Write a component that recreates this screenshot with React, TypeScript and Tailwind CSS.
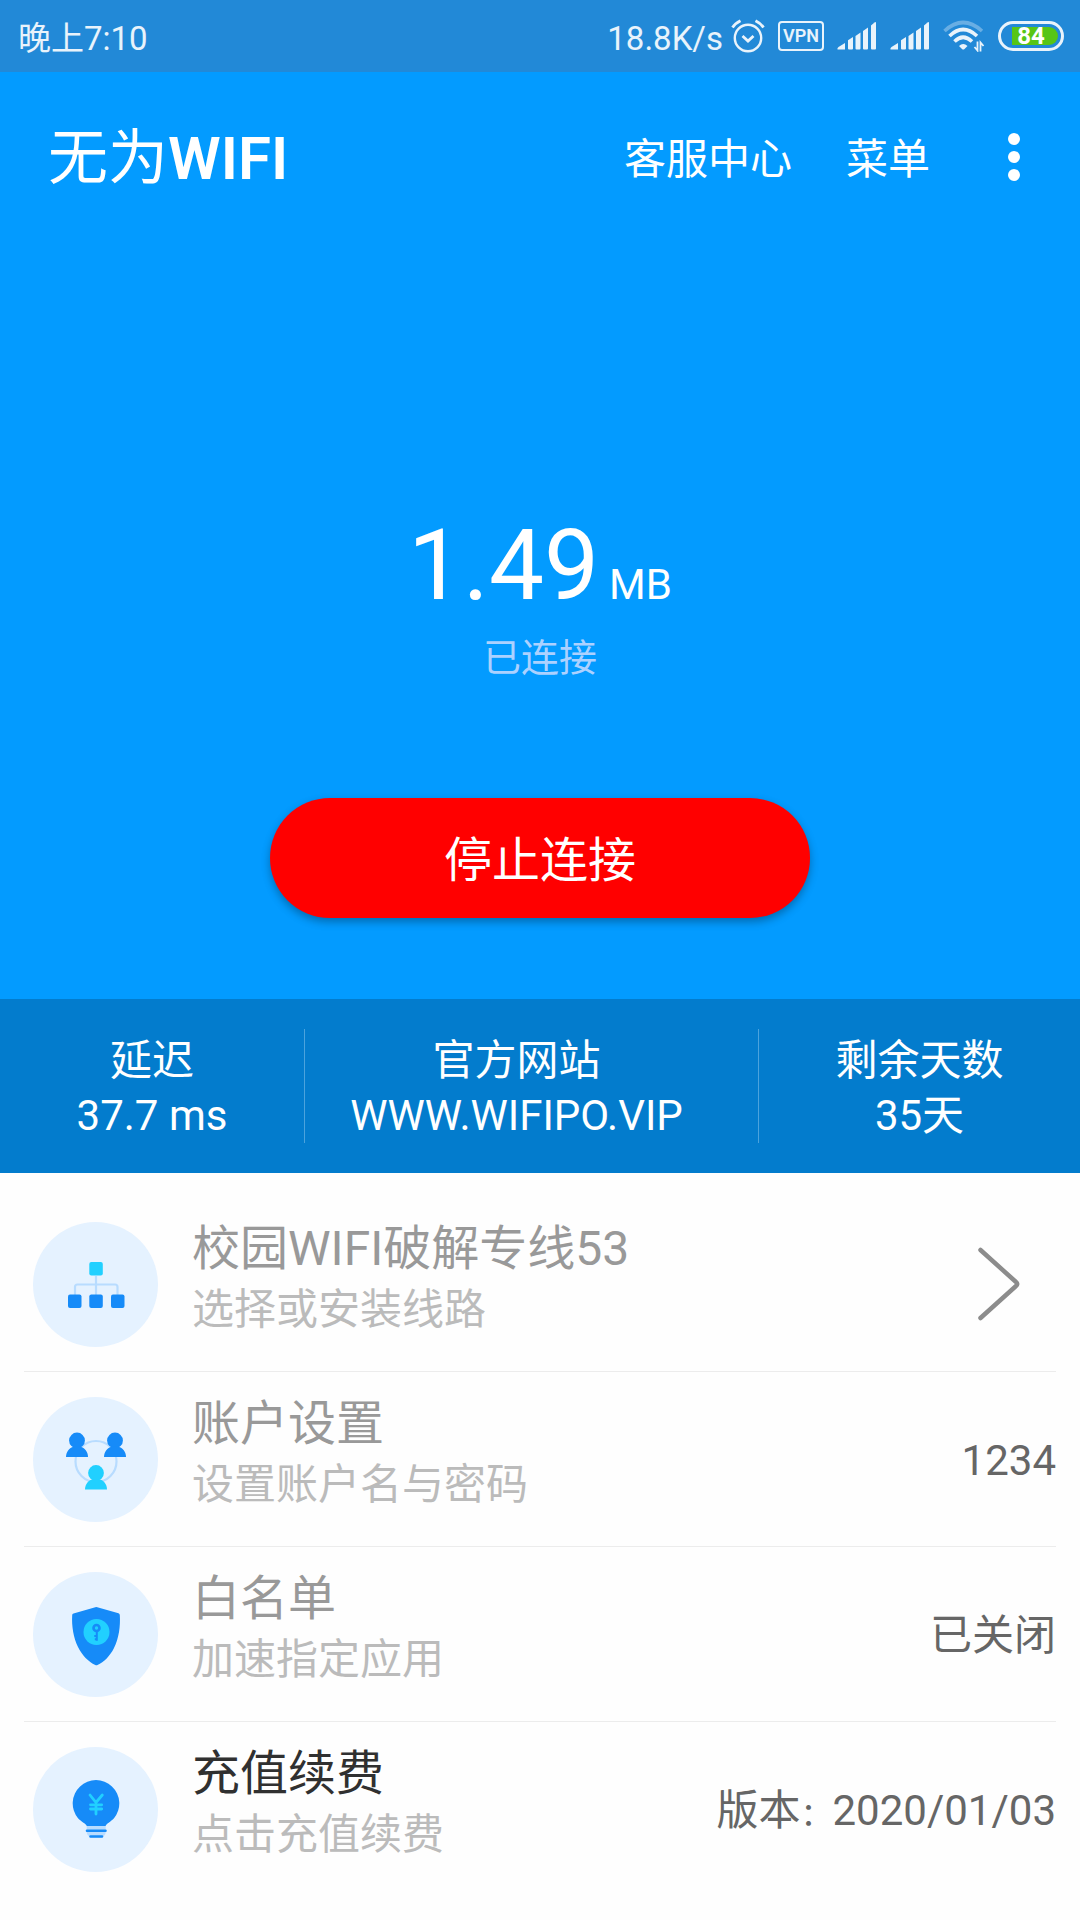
import type { ReactNode } from 'react'

type Row = {
  title: string
  subtitle: string
  icon: ReactNode
  value?: ReactNode
  active?: boolean
}

function AlarmIcon() {
  return (
    <svg viewBox="0 0 34 34" className="h-[34px] w-[34px]" fill="none" stroke="currentColor">
      <circle cx="17" cy="19" r="13.2" strokeWidth="2.4" />
      <path d="M11.5 17L17 22L22.5 17" strokeWidth="2.8" />
      <path d="M1.5 8.5Q4 4.5 9.5 1.8M32.5 8.5Q30 4.5 24.5 1.8" strokeWidth="2.8" />
    </svg>
  )
}

function SignalIcon() {
  return (
    <svg viewBox="0 0 40 30" className="h-[30px] w-10" fill="currentColor">
      <path d="M0.5 28.5Q0 27 1.5 26L8 22V28.5Z" />
      <path d="M11 19.2L16 16V27.5Q16 28.5 15 28.5H12Q11 28.5 11 27.5Z" />
      <path d="M18.5 15L23.5 11.5V27.5Q23.5 28.5 22.5 28.5H19.5Q18.5 28.5 18.5 27.5Z" />
      <path d="M26 10L31 6.5V27.5Q31 28.5 30 28.5H27Q26 28.5 26 27.5Z" />
      <path d="M34 4.5L37.5 1.5Q39 0.5 39 2V27.5Q39 28.5 38 28.5H35Q34 28.5 34 27.5Z" />
    </svg>
  )
}

function WifiIcon() {
  return (
    <svg viewBox="0 0 42 32" className="h-8 w-[42px]" fill="none" stroke="currentColor" strokeWidth="3.6">
      <path d="M1.5 11Q20 -6 39 11" opacity="0.35" />
      <path d="M6.5 16Q20 3 34 16" />
      <path d="M11.5 21.5Q20 13 29 21.5" />
      <path d="M16 26Q20.200 22 24.500 26L21.500 29Q20.200 30 19 29Z" fill="currentColor" stroke="none" />
      <path d="M34.5 21.5V30.5L31.5 27M37.5 31.5V22.5L40.5 26" strokeWidth="1.8" />
    </svg>
  )
}

function Battery({ level }: { level: number }) {
  return (
    <span className="relative flex h-[30px] w-[66px] items-center justify-end rounded-full border-[3px] border-white/90 pr-[3px]">
      <span className="h-[18px] w-[46px] rounded-l-xs rounded-r-full bg-[#57c515]" />
      <span className="absolute inset-0 flex items-center justify-center text-2xl leading-none font-bold text-white">
        {level}
      </span>
    </span>
  )
}

function StatusBar() {
  return (
    <div className="flex h-[72px] items-center justify-between bg-[#2289d7] pr-4 pl-[18px] text-[33px] leading-none text-white/90">
      <span className="pt-1">晚上7:10</span>
      <div className="flex items-center">
        <span className="pt-1">18.8K/s</span>
        <div className="ml-2 flex items-center gap-[13px]">
          <AlarmIcon />
          <span className="flex h-[30px] w-[46px] items-center justify-center rounded-sm border-2 border-white/90 text-lg leading-none font-semibold">
            VPN
          </span>
          <SignalIcon />
          <SignalIcon />
          <WifiIcon />
          <Battery level={84} />
        </div>
      </div>
    </div>
  )
}

function RouteIcon() {
  return (
    <svg viewBox="0 0 125 125" className="h-[125px] w-[125px]">
      <path d="M63 54V73M42 73V65Q42 62.5 44.5 62.5H82Q84.5 62.5 84.5 65V73" fill="none" stroke="#b8dcff" strokeWidth="2.2" />
      <rect x="56.3" y="40" width="13.5" height="13.5" rx="2" fill="#21d0ff" />
      <g fill="#168bf8">
        <rect x="35" y="72.5" width="13.5" height="13.5" rx="2" />
        <rect x="56.3" y="72.5" width="13.5" height="13.5" rx="2" />
        <rect x="78" y="72.5" width="13.5" height="13.5" rx="2" />
      </g>
    </svg>
  )
}

function Person({ x, y, color }: { x: number; y: number; color: string }) {
  return (
    <g transform={`translate(${x} ${y})`} fill={color}>
      <circle r="7.9" />
      <path d="M-11 16.5C-11 11 -7.5 7.5 -3.5 6.3H3.5C7.5 7.5 11 11 11 16.5Z" />
    </g>
  )
}

function AccountIcon() {
  return (
    <svg viewBox="0 0 125 125" className="h-[125px] w-[125px]">
      <circle cx="63" cy="64.5" r="20.5" fill="none" stroke="#b8dcff" strokeWidth="2.2" />
      <Person x={44} y={43.5} color="#168bf8" />
      <Person x={82} y={43.5} color="#168bf8" />
      <Person x={63} y={76} color="#21d0ff" />
    </svg>
  )
}

function ShieldIcon() {
  return (
    <svg viewBox="0 0 125 125" className="h-[125px] w-[125px]">
      <path
        d="M62.3 35.2Q63.3 34.8 64.3 35.2L85.5 41.2Q86.7 41.6 86.8 43C87.5 54 86 66 81 76C77 84 71 90 64.5 93Q63.4 93.5 62.3 93C55.5 90 49 83 45 75C40.5 66 38.5 54 39.2 43Q39.3 41.8 40.5 41.4Z"
        fill="#168bf8"
      />
      <circle cx="63.5" cy="60" r="13" fill="#21d0ff" />
      <circle cx="63.5" cy="56" r="3" fill="none" stroke="#168bf8" strokeWidth="2.6" />
      <path d="M63.8 58.5V68.7M64 64H61.3M64 67.2H61.8" fill="none" stroke="#168bf8" strokeWidth="2" />
    </svg>
  )
}

function BulbIcon() {
  return (
    <svg viewBox="0 0 125 125" className="h-[125px] w-[125px]">
      <path
        d="M53.7 79C53.7 77 48 74.500 45 71.200A23.3 23.3 0 1 1 81 71.200C78 74.500 72.700 77 72.700 79Z"
        fill="#168bf8"
      />
      <path d="M53.7 79H72.7V85Q72.7 88 69 90.5H57.5Q53.7 88 53.7 85Z" fill="#b8dcff" />
      <path d="M54 83.8H72.5M57.500 89.5H69" stroke="#168bf8" strokeWidth="2.6" strokeLinecap="round" />
      <path
        d="M57 48L63 55.5L69.3 48M63 55.5V67M57.5 57.8H68.7M57.5 62H68.7"
        fill="none"
        stroke="#21d0ff"
        strokeWidth="2.8"
        strokeLinecap="round"
      />
    </svg>
  )
}

const version = (
  <>
    版本<span className="text-[32px]">：</span>2020/01/03
  </>
)

const rows: Row[] = [
  { title: '校园WIFI破解专线53', subtitle: '选择或安装线路', icon: <RouteIcon /> },
  { title: '账户设置', subtitle: '设置账户名与密码', icon: <AccountIcon />, value: '1234' },
  { title: '白名单', subtitle: '加速指定应用', icon: <ShieldIcon />, value: '已关闭' },
  { title: '充值续费', subtitle: '点击充值续费', icon: <BulbIcon />, value: version, active: true },
]

function SettingRow({ row }: { row: Row }) {
  return (
    <li className="border-b border-[#ececec] last:border-b-0">
      <button type="button" className="flex h-[174px] w-full items-center pl-[9px] text-left">
        <span className="shrink-0 rounded-full bg-[#e5f2ff]">{row.icon}</span>
        <span className="ml-[34px] flex flex-1 flex-col pb-[10px]">
          <span className={`text-5xl leading-[62px] ${row.active ? 'text-[#303030]' : 'text-[#999999]'}`}>
            {row.title}
          </span>
          <span className="text-[42px] leading-[60px] text-[#bbbbbb]">{row.subtitle}</span>
        </span>
        {row.value ? (
          <span className="pt-1 text-[42px] leading-none text-[#666666]">{row.value}</span>
        ) : (
          <svg viewBox="0 0 44 74" className="mr-9 h-[74px] w-11" fill="none" stroke="#8c8c8c">
            <path d="M4.5 3L40 35Q42.5 37 40 39L4.5 71" strokeWidth="4.5" strokeLinecap="round" />
          </svg>
        )}
      </button>
    </li>
  )
}

export default function App() {
  return (
    <div className="min-h-screen bg-[#fefefe] font-['Roboto','Noto_Sans_CJK_SC',sans-serif]">
      <StatusBar />

      <main>
        <section className="flex flex-col items-center bg-[#039bff] pb-[81px] text-white">
          <header className="flex h-[170px] w-full items-center pr-[42px] pl-12">
            <h1 className="flex-1 pt-1 text-6xl leading-none">
              无为<span className="font-semibold">WIFI</span>
            </h1>
            <nav className="flex items-center gap-[54px] pt-1.5 text-[42px] leading-none">
              <a href="#service">客服中心</a>
              <a href="#menu">菜单</a>
            </nav>
            <button type="button" aria-label="更多" className="ml-[60px] flex h-12 w-12 items-center justify-center">
              <svg viewBox="0 0 12 48" className="h-12 w-3" fill="currentColor">
                <circle cx="6" cy="6" r="6" />
                <circle cx="6" cy="24" r="6" />
                <circle cx="6" cy="42" r="6" />
              </svg>
            </button>
          </header>

          <p className="mt-[274px] flex items-baseline gap-2.5">
            <span className="text-[98px] leading-[100px]">1.49</span>
            <span className="text-[42px] leading-none">MB</span>
          </p>
          <p className="mt-[18px] text-[38px] leading-[48px] text-[#acd1ff]">已连接</p>
          <button
            type="button"
            className="mt-[116px] h-[120px] w-1/2 rounded-full bg-[#ff0000] pt-1.5 text-5xl shadow-[0_4px_8px_rgba(0,0,0,0.3)]"
          >
            停止连接
          </button>
        </section>

        <section className="grid grid-cols-[305fr_454fr_321fr] bg-[#037ccd] py-[30px] text-center text-[42px] leading-[55px] text-white">
          <div className="border-r border-[#4ba3dd] pt-1">
            <p>延迟</p>
            <p>37.7 ms</p>
          </div>
          <div className="border-r border-[#4ba3dd] pt-1 pr-[30px]">
            <p>官方网站</p>
            <a href="#site">WWW.WIFIPO.VIP</a>
          </div>
          <div className="pt-1">
            <p>剩余天数</p>
            <p>35天</p>
          </div>
        </section>

        <ul className="px-6 pt-6">
          {rows.map((row) => (
            <SettingRow key={row.title} row={row} />
          ))}
        </ul>
      </main>
    </div>
  )
}
